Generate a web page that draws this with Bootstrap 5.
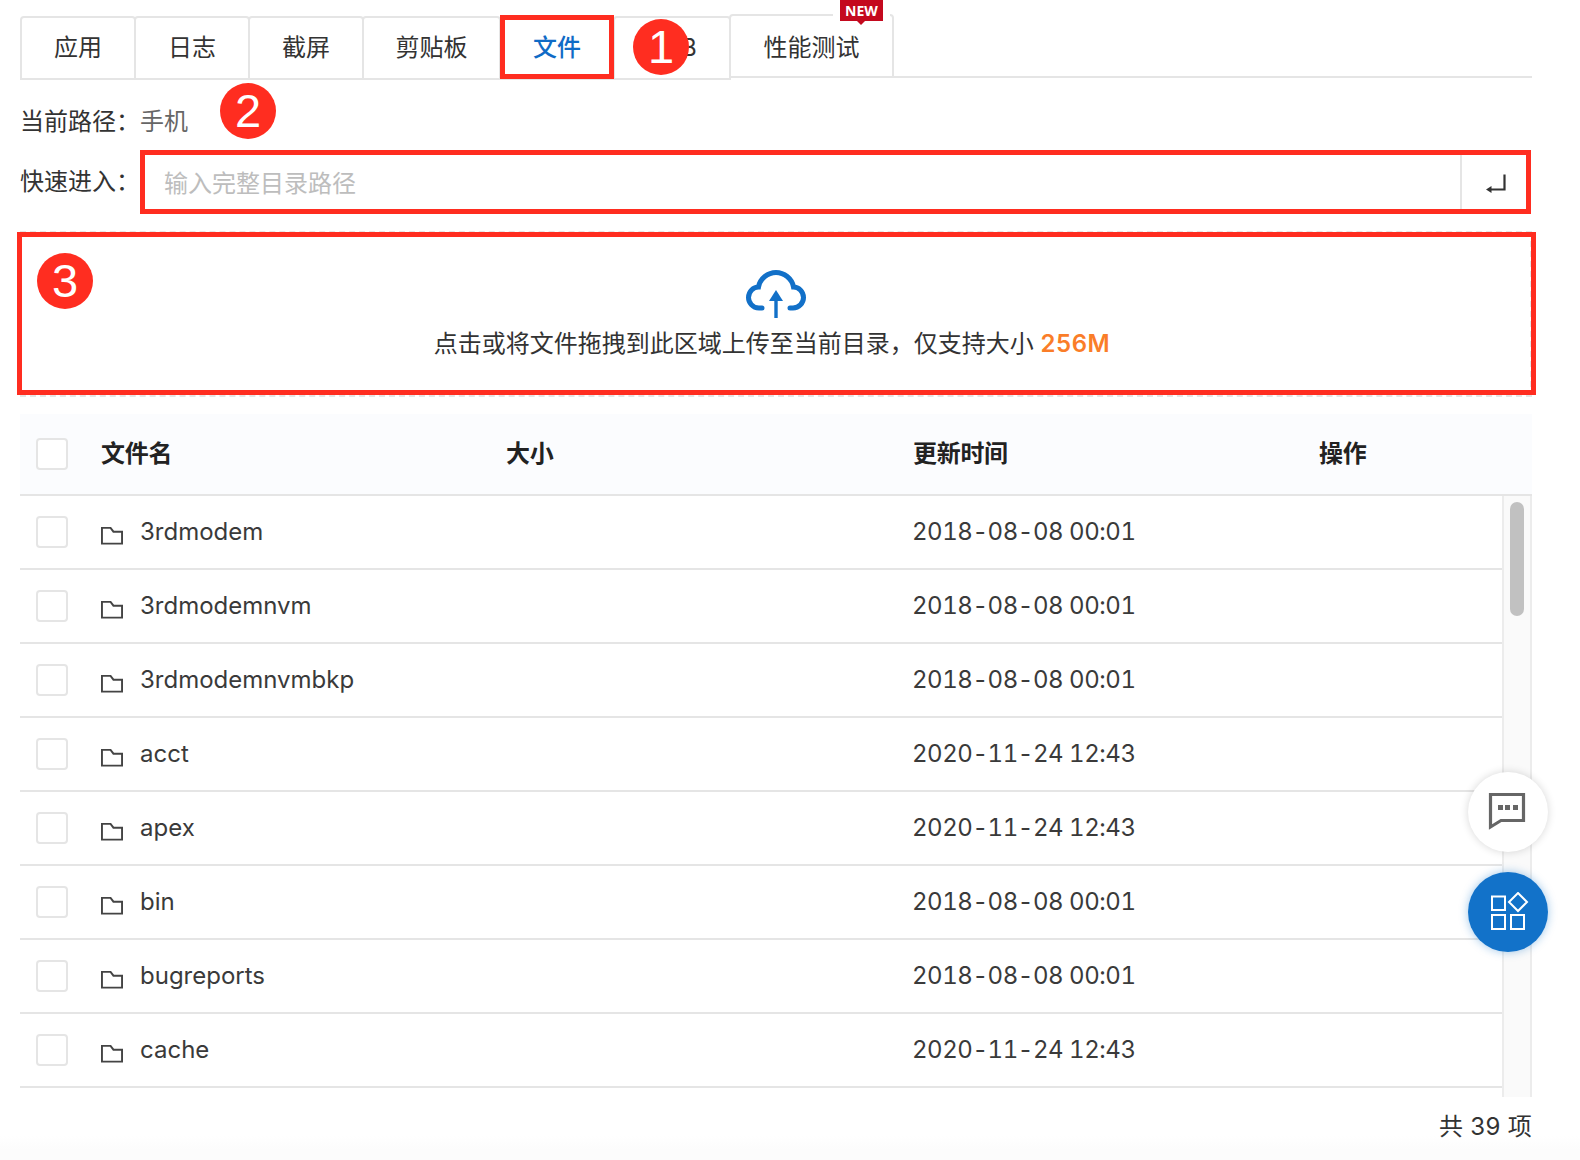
<!DOCTYPE html>
<html lang="zh-CN">
<head>
<meta charset="utf-8">
<title>文件</title>
<link href="https://cdn.jsdelivr.net/npm/bootstrap@5.3.0/dist/css/bootstrap.min.css" rel="stylesheet">
<style>
html,body{height:100%;}
body{background:#fff;color:#333;font-family:Inter,"Noto Sans CJK SC",sans-serif;font-size:24px;line-height:36px;overflow:hidden;}
.stage{position:relative;width:1580px;height:1160px;padding:16px 48px 0 20px;background:linear-gradient(#fff 1136px,#fcfcfc 1150px);}
.tabbar{height:64px;align-items:flex-start;}
.tabitem{height:64px;border:2px solid #e5e5e5;border-radius:4px 4px 0 0;margin-right:-2px;padding:0;white-space:nowrap;display:flex;align-items:center;justify-content:center;color:#333;text-decoration:none;background:#fff;}
.w116{width:116px;}
.w139{width:139px;}
.w118{width:118px;}
.tabitem.on{color:#0f6bc6;font-weight:500;}
.tabnew{position:relative;width:165px;margin-top:-2px;padding-top:4px;}
.tabrest{flex:1;height:64px;margin-top:-2px;border-bottom:2px solid #e5e5e5;}
.newflag{position:absolute;left:109px;top:-16px;width:43px;height:21px;background:#c4091e;color:#fff;font-size:14px;font-weight:700;line-height:21px;text-align:center;box-shadow:0 0 0 7px #fff;font-family:"Noto Sans",sans-serif;}
.newflag::after{content:"";position:absolute;left:17px;top:21px;border:4px solid transparent;border-top-color:#c4091e;border-bottom:0;}
.pathrow{height:74px;padding-top:10px;align-items:center;}
.pathlabel{width:120px;flex:none;}
.entrylabel{margin-top:-2px;}
.pathval{color:#666;}
.entryrow{height:58px;}
.entrybox{flex:1;height:58px;border:0;border-radius:0;}
.entrybox .form-control{border:0;border-radius:0;padding:2px 0 0 24px;font-size:24px;color:#333;box-shadow:none;}
.entrybox .form-control::placeholder{color:#bdbdbd;}
.entrybtn{width:73px;border:0;border-left:3px solid #e5e5e5;background:#fff;display:flex;align-items:center;justify-content:center;padding:2px 2px 0 0;}
.dropzone{margin-top:19px;height:166px;border:2px dashed #e5e5e5;display:flex;flex-direction:column;align-items:center;padding-top:37px;}
.dropline{margin-top:8px;margin-left:-8px;}
.dropsize{color:#fa7d28;font-weight:600;letter-spacing:.5px;}
.listhead{margin-top:17px;height:82px;background:#fbfcfe;border-bottom:2px solid #e5e5e5;font-weight:700;color:#222;letter-spacing:-.3px;}
.cellbox{width:81px;flex:none;padding-left:16px;display:flex;align-items:center;}
.tick{width:32px;height:32px;border:2px solid #e5e5e5;border-radius:4px;background:#fff;display:block;}
.cellname{width:405px;flex:none;}
.cellsize{width:407px;flex:none;}
.celltime{width:406px;flex:none;}
.listbody{height:601px;overflow:hidden;}
.listrows{flex:1;min-width:0;}
.listrow{height:74px;border-bottom:2px solid #e5e5e5;color:#3a3a3a;}
.foldericon{margin-top:7px;margin-right:1px;flex:none;}
.filename{margin-left:16px;letter-spacing:0;}
.filetime{letter-spacing:-.45px;font-variant-numeric:tabular-nums;margin-left:-1px;}
.track{width:30px;flex:none;background:#fafafa;border-left:2px solid #ececec;border-right:2px solid #ececec;padding:6px 6px 0;}
.thumb{height:114px;background:#c1c1c1;border-radius:8px;}
.pager{height:60px;justify-content:flex-end;align-items:center;letter-spacing:.3px;}
.mark-red{position:absolute;border:5px solid #ff2d20;pointer-events:none;}
.mark-tab{left:500px;top:15px;width:114px;height:64px;}
.mark-entry{left:140px;top:150px;width:1391px;height:64px;}
.mark-drop{left:17px;top:232px;width:1519px;height:163px;}
.pin{position:absolute;width:56px;height:56px;border-radius:50%;background:#ff2d20;color:#fff;font-family:"Liberation Sans",sans-serif;font-size:47px;line-height:56px;text-align:center;}
.pin1{left:633px;top:19px;}
.pin2{left:220px;top:83px;}
.pin3{left:37px;top:253px;}
.fab{position:absolute;left:1468px;width:80px;height:80px;border-radius:50%;display:flex;align-items:center;justify-content:center;}
.fabchat{top:772px;background:#fff;box-shadow:0 0 8px rgba(0,0,0,.16);}
.fabchat svg{margin:-2px 2px 0 0;}
.fabapps{top:872px;background:#1272c9;box-shadow:0 0 10px rgba(18,114,201,.4);}
.fabapps svg{margin-left:2px;}
</style>
</head>
<body>
<div class="stage">
  <nav class="d-flex tabbar">
    <a class="tabitem w116" href="#">应用</a>
    <a class="tabitem w116" href="#">日志</a>
    <a class="tabitem w116" href="#">截屏</a>
    <a class="tabitem w139" href="#">剪贴板</a>
    <a class="tabitem w116 on" href="#">文件</a>
    <a class="tabitem w118" href="#">ADB</a>
    <a class="tabitem tabnew" href="#">性能测试<span class="newflag">NEW</span></a>
    <div class="tabrest"></div>
  </nav>

  <div class="d-flex pathrow">
    <span class="pathlabel">当前路径&#xFF1A;</span><span class="pathval">手机</span>
  </div>

  <div class="d-flex align-items-center entryrow">
    <span class="pathlabel entrylabel">快速进入&#xFF1A;</span>
    <div class="input-group entrybox">
      <input class="form-control" type="text" placeholder="输入完整目录路径">
      <button class="entrybtn" type="button" aria-label="进入">
        <svg width="20" height="20" viewBox="0 0 20 20"><path d="M18.500 0.500V15.500H4" fill="none" stroke="#333" stroke-width="2.200"/><path d="M0 15.500L5.500 12V19Z" fill="#333"/></svg>
      </button>
    </div>
  </div>

  <div class="dropzone">
    <svg width="60" height="48" viewBox="0 0 60 48"><path d="M16 38H13C6.500 38 2.500 32.500 2.500 27.500C2.500 21.500 7.500 17 12.500 17C14 8.500 22 2.500 30 2.500C38 2.500 46 8.500 47.500 17C52.500 17 57.500 21.500 57.500 27.500C57.500 33 53 38 47 38H44" fill="none" stroke="#1270c8" stroke-width="5" stroke-linecap="round"/><path d="M30 20L37 31H23Z" fill="#1270c8"/><path d="M30 28V48" stroke="#1270c8" stroke-width="3.400"/></svg>
    <div class="dropline">点击或将文件拖拽到此区域上传至当前目录&#xFF0C;仅支持大小 <span class="dropsize">256M</span></div>
  </div>

  <div class="d-flex align-items-center listhead">
    <div class="cellbox"><span class="tick"></span></div>
    <div class="cellname">文件名</div>
    <div class="cellsize">大小</div>
    <div class="celltime">更新时间</div>
    <div>操作</div>
  </div>

  <div class="d-flex listbody">
    <div class="listrows">
      <div class="d-flex align-items-center listrow"><div class="cellbox"><span class="tick"></span></div><div class="cellname d-flex align-items-center"><svg class="foldericon" width="22" height="19" viewBox="0 0 23 19"><path d="M1 18V1.500H10L13 5.500H22V18Z" fill="none" stroke="#444" stroke-width="2"/></svg><span class="filename">3rdmodem</span></div><div class="cellsize"></div><div class="filetime">2018-08-08 00:01</div></div>
      <div class="d-flex align-items-center listrow"><div class="cellbox"><span class="tick"></span></div><div class="cellname d-flex align-items-center"><svg class="foldericon" width="22" height="19" viewBox="0 0 23 19"><path d="M1 18V1.500H10L13 5.500H22V18Z" fill="none" stroke="#444" stroke-width="2"/></svg><span class="filename">3rdmodemnvm</span></div><div class="cellsize"></div><div class="filetime">2018-08-08 00:01</div></div>
      <div class="d-flex align-items-center listrow"><div class="cellbox"><span class="tick"></span></div><div class="cellname d-flex align-items-center"><svg class="foldericon" width="22" height="19" viewBox="0 0 23 19"><path d="M1 18V1.500H10L13 5.500H22V18Z" fill="none" stroke="#444" stroke-width="2"/></svg><span class="filename">3rdmodemnvmbkp</span></div><div class="cellsize"></div><div class="filetime">2018-08-08 00:01</div></div>
      <div class="d-flex align-items-center listrow"><div class="cellbox"><span class="tick"></span></div><div class="cellname d-flex align-items-center"><svg class="foldericon" width="22" height="19" viewBox="0 0 23 19"><path d="M1 18V1.500H10L13 5.500H22V18Z" fill="none" stroke="#444" stroke-width="2"/></svg><span class="filename">acct</span></div><div class="cellsize"></div><div class="filetime">2020-11-24 12:43</div></div>
      <div class="d-flex align-items-center listrow"><div class="cellbox"><span class="tick"></span></div><div class="cellname d-flex align-items-center"><svg class="foldericon" width="22" height="19" viewBox="0 0 23 19"><path d="M1 18V1.500H10L13 5.500H22V18Z" fill="none" stroke="#444" stroke-width="2"/></svg><span class="filename">apex</span></div><div class="cellsize"></div><div class="filetime">2020-11-24 12:43</div></div>
      <div class="d-flex align-items-center listrow"><div class="cellbox"><span class="tick"></span></div><div class="cellname d-flex align-items-center"><svg class="foldericon" width="22" height="19" viewBox="0 0 23 19"><path d="M1 18V1.500H10L13 5.500H22V18Z" fill="none" stroke="#444" stroke-width="2"/></svg><span class="filename">bin</span></div><div class="cellsize"></div><div class="filetime">2018-08-08 00:01</div></div>
      <div class="d-flex align-items-center listrow"><div class="cellbox"><span class="tick"></span></div><div class="cellname d-flex align-items-center"><svg class="foldericon" width="22" height="19" viewBox="0 0 23 19"><path d="M1 18V1.500H10L13 5.500H22V18Z" fill="none" stroke="#444" stroke-width="2"/></svg><span class="filename">bugreports</span></div><div class="cellsize"></div><div class="filetime">2018-08-08 00:01</div></div>
      <div class="d-flex align-items-center listrow"><div class="cellbox"><span class="tick"></span></div><div class="cellname d-flex align-items-center"><svg class="foldericon" width="22" height="19" viewBox="0 0 23 19"><path d="M1 18V1.500H10L13 5.500H22V18Z" fill="none" stroke="#444" stroke-width="2"/></svg><span class="filename">cache</span></div><div class="cellsize"></div><div class="filetime">2020-11-24 12:43</div></div>
    </div>
    <div class="track"><div class="thumb"></div></div>
  </div>

  <div class="d-flex pager">共 39 项</div>

  <div class="mark-red mark-tab"></div>
  <div class="mark-red mark-entry"></div>
  <div class="mark-red mark-drop"></div>
  <div class="pin pin1">1</div>
  <div class="pin pin2">2</div>
  <div class="pin pin3">3</div>

  <div class="fab fabchat">
    <svg width="38" height="38" viewBox="0 0 38 38"><path d="M2.500 2.500H35.500V28.500H13L2.500 35Z" fill="none" stroke="#666" stroke-width="3.200"/><path d="M10 13h5v5h-5zM17 13h5v5h-5zM25 13h5v5h-5z" fill="#666"/></svg>
  </div>
  <div class="fab fabapps">
    <svg width="40" height="40" viewBox="0 0 40 40"><path d="M3 4.500H16V18H3ZM3 23H16V37H3ZM22 23H35V37H22Z" fill="none" stroke="#fff" stroke-width="2"/><path d="M29 1L38 10L29 19L20 10Z" fill="none" stroke="#fff" stroke-width="2"/></svg>
  </div>
</div>
<script src="https://cdn.jsdelivr.net/npm/bootstrap@5.3.0/dist/js/bootstrap.bundle.min.js"></script>
</body>
</html>
